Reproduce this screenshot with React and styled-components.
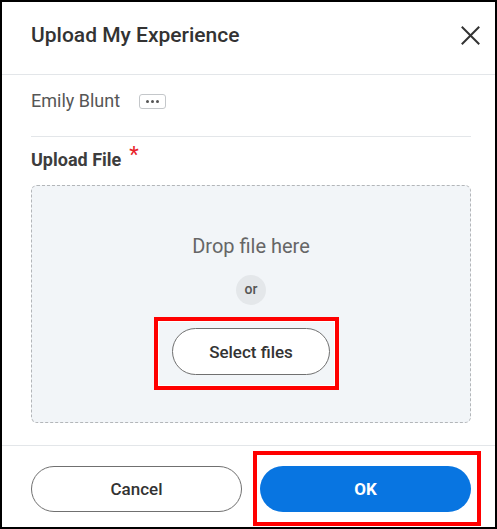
import React from "react";
import styled, { createGlobalStyle } from "styled-components";

const Global = createGlobalStyle`
  html, body { margin: 0; padding: 0; background: #fff; }
  body { font-family: Roboto, "Liberation Sans", sans-serif; }
  * { box-sizing: border-box; }
`;

const Dialog = styled.div`
  width: 497px;
  height: 529px;
  border: 2px solid #000;
  background: #fff;
  display: flex;
  flex-direction: column;
  overflow: hidden;
`;

const Header = styled.div`
  height: 73px;
  flex: none;
  display: flex;
  align-items: center;
  justify-content: space-between;
  padding: 0 15px 6px 29px;
  border-bottom: 1px solid #e3e6e9;
`;

const Title = styled.h1`
  margin: 0;
  font-size: 21px;
  font-weight: 500;
  color: #333;
  line-height: 24px;
`;

const CloseButton = styled.button`
  width: 20px;
  height: 20px;
  padding: 0;
  border: none;
  background: none;
  display: flex;
  align-items: center;
  justify-content: center;
  cursor: pointer;
`;

const Body = styled.div`
  padding: 15px 24px 22px 29px;
  flex: none;
`;

const NameRow = styled.div`
  display: flex;
  align-items: center;
  gap: 19px;
  height: 22px;
  padding-bottom: 24px;
  box-sizing: content-box;
  border-bottom: 1px solid #e3e6e9;
`;

const Name = styled.span`
  font-size: 18px;
  line-height: 22px;
  color: #565656;
`;

const MoreButton = styled.button`
  width: 27px;
  height: 15px;
  padding: 0;
  border: 1px solid #c4c7ca;
  border-radius: 3px;
  background: #fff;
  display: flex;
  align-items: center;
  justify-content: center;
  gap: 2px;
`;

const Dot = styled.span`
  width: 3px;
  height: 3px;
  border-radius: 50%;
  background: #555;
`;

const Label = styled.div`
  margin-top: 12px;
  font-size: 18px;
  line-height: 22px;
  font-weight: 700;
  color: #3d3d3d;
  display: flex;
  align-items: flex-start;
  gap: 8px;
`;

const Required = styled.span`
  color: #e8232a;
  font-size: 22px;
  line-height: 16px;
  font-weight: 400;
  margin-top: -2px;
`;

const DropZone = styled.div`
  margin-top: 14px;
  height: 238px;
  border: 1px dashed #b3b6b9;
  border-radius: 6px;
  background: #f2f5f8;
  display: flex;
  flex-direction: column;
  align-items: center;
  padding-top: 48px;
`;

const DropText = styled.div`
  font-size: 20px;
  line-height: 24px;
  color: #666;
`;

const OrBadge = styled.div`
  margin-top: 17px;
  width: 30px;
  height: 30px;
  border-radius: 50%;
  background: #e4e7ea;
  color: #555;
  font-size: 14px;
  font-weight: 500;
  display: flex;
  align-items: center;
  justify-content: center;
  padding-bottom: 2px;
`;

const Highlight = styled.div`
  position: relative;
  margin-top: ${(p) => p.$top || 0}px;
`;

const Frame = styled.div`
  position: absolute;
  left: ${(p) => p.$l}px;
  right: ${(p) => p.$r}px;
  top: ${(p) => p.$t}px;
  bottom: ${(p) => p.$b}px;
  border: 4px solid #ff0000;
  box-shadow: inset 0 0 0 1px #fff;
  pointer-events: none;
`;

const PillButton = styled.button`
  width: ${(p) => p.$w}px;
  height: ${(p) => p.$h}px;
  border-radius: 999px;
  font-family: Roboto, "Liberation Sans", sans-serif;
  font-size: 17px;
  font-weight: ${(p) => (p.$primary ? 700 : 500)};
  color: ${(p) => (p.$primary ? "#fff" : "#333")};
  background: ${(p) => (p.$primary ? "#0875e1" : "#fff")};
  border: ${(p) => (p.$primary ? "none" : "1.5px solid #707070")};
  display: flex;
  align-items: center;
  justify-content: center;
  cursor: pointer;
`;

const Footer = styled.div`
  flex: none;
  border-top: 1px solid #e3e6e9;
  padding: 20px 24px 0 29px;
  display: flex;
  gap: 18px;
`;

export default function App() {
  return (
    <>
      <Global />
      <Dialog>
        <Header>
          <Title>Upload My Experience</Title>
          <CloseButton aria-label="Close">
            <svg width="19" height="19" viewBox="0 0 19 19">
              <path d="M1.5 1.5 L17.5 17.5 M17.5 1.5 L1.5 17.5" stroke="#333" strokeWidth="2" strokeLinecap="square" />
            </svg>
          </CloseButton>
        </Header>

        <Body>
          <NameRow>
            <Name>Emily Blunt</Name>
            <MoreButton aria-label="More">
              <Dot />
              <Dot />
              <Dot />
            </MoreButton>
          </NameRow>

          <Label>
            Upload File <Required>*</Required>
          </Label>

          <DropZone>
            <DropText>Drop file here</DropText>
            <OrBadge>or</OrBadge>
            <Highlight $top={23}>
              <PillButton $w={158} $h={47}>Select files</PillButton>
              <Frame $l={-18} $r={-9} $t={-11} $b={-15} />
            </Highlight>
          </DropZone>
        </Body>

        <Footer>
          <PillButton $w={211} $h={46}>Cancel</PillButton>
          <Highlight>
            <PillButton $w={211} $h={46} $primary>OK</PillButton>
            <Frame $l={-7} $r={-10} $t={-15} $b={-14} />
          </Highlight>
        </Footer>
      </Dialog>
    </>
  );
}
